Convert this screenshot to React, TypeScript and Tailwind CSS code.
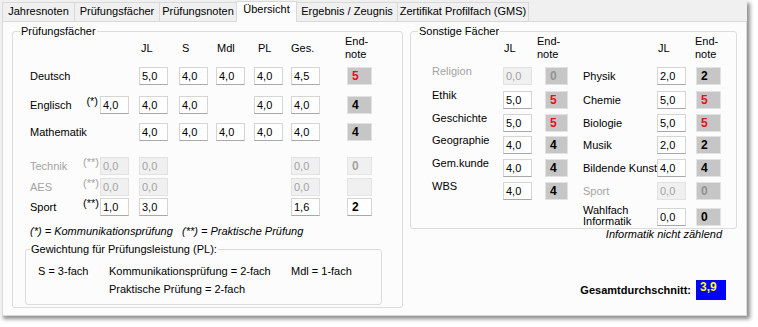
type Tone = 'red' | 'black' | 'dim' | 'off' | 'blank' | 'white';

const tabs = [
  { label: 'Jahresnoten', w: 'w-[73px]' },
  { label: 'Prüfungsfächer', w: 'w-[86px]' },
  { label: 'Prüfungsnoten', w: 'w-[78px]' },
  { label: 'Übersicht', w: 'w-[61px]', active: true },
  { label: 'Ergebnis / Zeugnis', w: 'w-[102px]' },
  { label: 'Zertifikat Profilfach (GMS)', w: 'w-[132px]' },
];

// extra, JL, S, Mdl, PL, Ges
const examRows: { name: string; mark?: string; vals: (string | undefined)[]; end?: string; tone: Tone; off?: boolean; mt: string }[] = [
  { name: 'Deutsch', vals: [undefined, '5,0', '4,0', '4,0', '4,0', '4,5'], end: '5', tone: 'red', mt: 'mt-[6px]' },
  { name: 'Englisch', mark: '(*)', vals: ['4,0', '4,0', '4,0', undefined, '4,0', '4,0'], end: '4', tone: 'black', mt: 'mt-[11px]' },
  { name: 'Mathematik', vals: [undefined, '4,0', '4,0', '4,0', '4,0', '4,0'], end: '4', tone: 'black', mt: 'mt-[9px]' },
  { name: 'Technik', mark: '(**)', vals: ['0,0', '0,0', undefined, undefined, undefined, '0,0'], end: '0', tone: 'off', off: true, mt: 'mt-[16px]' },
  { name: 'AES', mark: '(**)', vals: ['0,0', '0,0', undefined, undefined, undefined, '0,0'], tone: 'blank', off: true, mt: 'mt-[3px]' },
  { name: 'Sport', mark: '(**)', vals: ['1,0', '3,0', undefined, undefined, undefined, '1,6'], end: '2', tone: 'white', mt: 'mt-[2px]' },
];

type Side = { name: string; jl: string; end: string; tone: Tone; off?: boolean };
const otherRows: { left?: Side; right: Side; mt: string; tall?: boolean }[] = [
  { left: { name: 'Religion', jl: '0,0', end: '0', tone: 'dim', off: true }, right: { name: 'Physik', jl: '2,0', end: '2', tone: 'black' }, mt: 'mt-[6px]' },
  { left: { name: 'Ethik', jl: '5,0', end: '5', tone: 'red' }, right: { name: 'Chemie', jl: '5,0', end: '5', tone: 'red' }, mt: 'mt-[6px]' },
  { left: { name: 'Geschichte', jl: '5,0', end: '5', tone: 'red' }, right: { name: 'Biologie', jl: '5,0', end: '5', tone: 'red' }, mt: 'mt-[5px]' },
  { left: { name: 'Geographie', jl: '4,0', end: '4', tone: 'black' }, right: { name: 'Musik', jl: '2,0', end: '2', tone: 'black' }, mt: 'mt-[4px]' },
  { left: { name: 'Gem.kunde', jl: '4,0', end: '4', tone: 'black' }, right: { name: 'Bildende Kunst', jl: '4,0', end: '4', tone: 'black' }, mt: 'mt-[5px]' },
  { left: { name: 'WBS', jl: '4,0', end: '4', tone: 'black' }, right: { name: 'Sport', jl: '0,0', end: '0', tone: 'dim', off: true }, mt: 'mt-[5px]' },
  { right: { name: 'Wahlfach Informatik', jl: '0,0', end: '0', tone: 'black' }, mt: 'mt-[7px]', tall: true },
];

const gradeTone: Record<Tone, string> = {
  red: 'bg-[#c6c6c6] border-[#e2e2e2] text-[#e8101a]',
  black: 'bg-[#c6c6c6] border-[#e2e2e2] text-black',
  dim: 'bg-[#c6c6c6] border-[#e2e2e2] text-[#929292]',
  off: 'bg-[#f0f0f0] border-[#e4e4e4] text-[#a3a3a3]',
  blank: 'bg-[#f0f0f0] border-[#e4e4e4]',
  white: 'bg-white border-[#d5d5d5] border-b-[#a8a8a8] text-black',
};

function Field({ v, off }: { v?: string; off?: boolean }) {
  if (v === undefined) return <div />;
  return (
    <div
      className={`w-[29px] h-[18px] border pl-[2px] leading-[16px] ${off ? 'bg-[#f0f0f0] border-[#e2e2e2] text-[#a3a3a3]' : 'bg-white border-[#d5d5d5] border-b-[#a8a8a8] text-black'}`}
    >
      {v}
    </div>
  );
}

function Grade({ v, tone, w }: { v?: string; tone: Tone; w: string }) {
  return <div className={`${w} h-[18px] border pl-[4px] leading-[16px] font-bold text-[12px] ${gradeTone[tone]}`}>{v}</div>;
}

function TabStrip() {
  return (
    <div className="h-[21px] flex items-end pl-[2px]">
      {tabs.map(({ label, w, active }, i) => (
        <div
          key={label}
          className={`${w} ${i > 0 ? '-ml-px' : ''} border border-b-0 border-[#d9d9d9] text-center whitespace-nowrap ${active ? 'h-[21px] -mb-px relative z-10 bg-[#fcfcfc] pt-[1px]' : 'h-[19px] bg-[#f0f0f0] pt-[2px]'}`}
        >
          {label}
        </div>
      ))}
    </div>
  );
}

const examCols = 'grid grid-cols-[53px_17px_39px_40px_37px_38px_37px_54px_28px]';

function ExamGroup() {
  return (
    <fieldset className="ml-[9px] mt-[3px] w-[391px] h-[283px] border border-[#dcdcdc] rounded-[3px]">
      <legend className="ml-[7px] px-[1px]">Prüfungsfächer</legend>
      <div className="pl-[12px]">
        <div className="pl-[5px]">
          <div className={`${examCols} h-[26px] -mt-[3px] items-center`}>
            <div />
            <div />
            <div />
            <div className="pl-[2px]">JL</div>
            <div className="pl-[3px]">S</div>
            <div className="pl-[1px]">Mdl</div>
            <div className="pl-[4px]">PL</div>
            <div>Ges.</div>
            <div>
              End-
              <br />
              note
            </div>
          </div>
          {examRows.map((r) => (
            <div key={r.name} className={`${examCols} h-[18px] items-center ${r.mt}`}>
              <div className={`whitespace-nowrap ${r.off ? 'text-[#a3a3a3]' : ''}`}>{r.name}</div>
              <div className={`self-start -mt-[1px] text-right pr-[2px] whitespace-nowrap ${r.off ? 'text-[#a3a3a3]' : ''}`}>{r.mark}</div>
              {r.vals.map((v, i) => (
                <Field key={i} v={v} off={r.off} />
              ))}
              <div className="pl-[2px]">
                <Grade v={r.end} tone={r.tone} w="w-[25px]" />
              </div>
            </div>
          ))}
          <div className="mt-[9px] flex italic whitespace-nowrap">
            <span className="w-[152px]">(*) = Kommunikationsprüfung</span>
            <span>(**) = Praktische Prüfung</span>
          </div>
        </div>
        <fieldset className="mt-[5px] w-[357px] h-[62px] border border-[#dcdcdc] rounded-[3px]">
          <legend className="ml-[4px] px-[1px]">Gewichtung für Prüfungsleistung (PL):</legend>
          <div className="pl-[12px] mt-[9px] flex whitespace-nowrap">
            <span className="w-[71px]">S = 3-fach</span>
            <span className="w-[182px]">Kommunikationsprüfung = 2-fach</span>
            <span>Mdl = 1-fach</span>
          </div>
          <div className="pl-[83px] mt-[5px] whitespace-nowrap">Praktische Prüfung = 2-fach</div>
        </fieldset>
      </div>
    </fieldset>
  );
}

const otherCols = 'grid grid-cols-[71px_42px_38px_74px_39px_25px]';

function OtherGroup() {
  return (
    <fieldset className="mt-[3px] w-[327px] h-[204px] border border-[#dcdcdc] rounded-[3px]">
      <legend className="ml-[7px] px-[1px]">Sonstige Fächer</legend>
      <div className="pl-[21px]">
        <div className={`${otherCols} h-[26px] -mt-[3px] items-center`}>
          <div />
          <div className="pl-[1px]">JL</div>
          <div className="-ml-[8px]">
            End-
            <br />
            note
          </div>
          <div />
          <div className="pl-[1px]">JL</div>
          <div className="-ml-[1px]">
            End-
            <br />
            note
          </div>
        </div>
        {otherRows.map((r) => (
          <div key={r.right.name} className={`${otherCols} h-[18px] items-center ${r.mt}`}>
            <div className={`self-start -mt-[2px] whitespace-nowrap ${r.left?.off ? 'text-[#a3a3a3]' : ''}`}>{r.left?.name}</div>
            {r.left ? <Field v={r.left.jl} off={r.left.off} /> : <div />}
            {r.left ? <Grade v={r.left.end} tone={r.left.tone} w="w-[23px]" /> : <div />}
            <div className={`${r.tall ? 'w-[60px] leading-[11px] -mt-[2px]' : 'whitespace-nowrap'} ${r.right.off ? 'text-[#a3a3a3]' : ''}`}>
              {r.right.name}
            </div>
            <Field v={r.right.jl} off={r.right.off} />
            <Grade v={r.right.end} tone={r.right.tone} w="w-[25px]" />
          </div>
        ))}
      </div>
    </fieldset>
  );
}

export default function App() {
  return (
    <div className="w-[758px] h-[327px] bg-white text-[11px] leading-[13px] text-black font-['Liberation_Sans',Arial,sans-serif]">
      <div className="w-[747px] h-[316px] bg-[#f0f0f0] shadow-[3px_3px_4px_rgba(0,0,0,0.45)] flex flex-col">
        <TabStrip />
        <div className="flex-1 ml-[2px] w-[745px] border border-[#d9d9d9] bg-[#fcfcfc] flex">
          <ExamGroup />
          <div className="ml-[7px] w-[327px] flex flex-col">
            <OtherGroup />
            <div className="-mt-[1px] pr-[15px] text-right italic">Informatik nicht zählend</div>
            <div className="mt-[39px] pr-[11px] flex justify-end items-center gap-[5px]">
              <span className="font-bold">Gesamtdurchschnitt:</span>
              <span className="w-[30px] h-[20px] bg-[#0000ff] text-[#ffff00] font-bold text-[12px] leading-[14px] pl-[4px]">3,9</span>
            </div>
          </div>
        </div>
      </div>
    </div>
  );
}
